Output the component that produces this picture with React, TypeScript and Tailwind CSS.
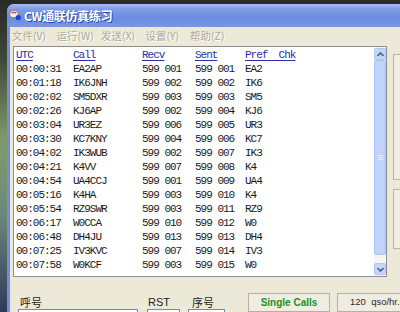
import React from 'react';

interface Qso {
  utc: string;
  call: string;
  recv: string;
  sent: string;
  pref: string;
}

const qsos: Qso[] = [
  { utc: '00:00:31', call: 'EA2AP', recv: '599 001', sent: '599 001', pref: 'EA2' },
  { utc: '00:01:18', call: 'IK6JNH', recv: '599 002', sent: '599 002', pref: 'IK6' },
  { utc: '00:02:02', call: 'SM5DXR', recv: '599 003', sent: '599 003', pref: 'SM5' },
  { utc: '00:02:26', call: 'KJ6AP', recv: '599 002', sent: '599 004', pref: 'KJ6' },
  { utc: '00:03:04', call: 'UR3EZ', recv: '599 006', sent: '599 005', pref: 'UR3' },
  { utc: '00:03:30', call: 'KC7KNY', recv: '599 004', sent: '599 006', pref: 'KC7' },
  { utc: '00:04:02', call: 'IK3WUB', recv: '599 002', sent: '599 007', pref: 'IK3' },
  { utc: '00:04:21', call: 'K4VV', recv: '599 007', sent: '599 008', pref: 'K4' },
  { utc: '00:04:54', call: 'UA4CCJ', recv: '599 001', sent: '599 009', pref: 'UA4' },
  { utc: '00:05:16', call: 'K4HA', recv: '599 003', sent: '599 010', pref: 'K4' },
  { utc: '00:05:54', call: 'RZ9SWR', recv: '599 003', sent: '599 011', pref: 'RZ9' },
  { utc: '00:06:17', call: 'W0CCA', recv: '599 010', sent: '599 012', pref: 'W0' },
  { utc: '00:06:48', call: 'DH4JU', recv: '599 013', sent: '599 013', pref: 'DH4' },
  { utc: '00:07:25', call: 'IV3KVC', recv: '599 007', sent: '599 014', pref: 'IV3' },
  { utc: '00:07:58', call: 'W0KCF', recv: '599 003', sent: '599 015', pref: 'W0' },
];

const menus = ['文件(V)', '运行(W)', '发送(X)', '设置(Y)', '帮助(Z)'];

const cols = 'grid grid-cols-[57px_69px_53px_50px_1fr] h-[14px] leading-[14px]';

function AppIcon() {
  return (
    <svg width="13" height="13" viewBox="0 0 13 13" className="shrink-0">
      <ellipse cx="5" cy="5" rx="4.2" ry="3.6" fill="#f4f4f4" stroke="#7a7a7a" strokeWidth="0.8" />
      <path d="M2.6 4.2 Q5 2.4 7.4 4.2" stroke="#d8332a" strokeWidth="1.3" fill="none" />
      <circle cx="9.2" cy="8.6" r="2.6" fill="#1f3fcf" />
      <path d="M1.5 11 L6 8.5 L7 9.5 L3 12 Z" fill="#8a8a8a" />
    </svg>
  );
}

function Chevron({ up }: { up?: boolean }) {
  return (
    <svg width="7" height="5" viewBox="0 0 7 5">
      <path d={up ? 'M0.5 4 L3.5 1 L6.5 4' : 'M0.5 1 L3.5 4 L6.5 1'} stroke="#4d6185" strokeWidth="1.6" fill="none" />
    </svg>
  );
}

function ScrollBar() {
  return (
    <div className="w-[12px] flex flex-col bg-[#f5f4ef] py-[1px]">
      <div className="h-[12px] shrink-0 rounded-[2px] bg-[#c6d6fb] border border-[#b3c6f2] flex items-center justify-center">
        <Chevron up />
      </div>
      <div className="flex-1 mb-[8px] rounded-[2px] bg-[#c2d3fb] border border-[#adc2f2] flex flex-col items-center justify-center gap-[1px]">
        <div className="w-[5px] h-[1px] bg-[#e8eefd]" />
        <div className="w-[5px] h-[1px] bg-[#e8eefd]" />
        <div className="w-[5px] h-[1px] bg-[#e8eefd]" />
      </div>
      <div className="h-[12px] shrink-0 rounded-[2px] bg-[#c6d6fb] border border-[#b3c6f2] flex items-center justify-center">
        <Chevron />
      </div>
    </div>
  );
}

export default function App() {
  return (
    <div className="w-[400px] h-[312px] overflow-hidden flex bg-[linear-gradient(180deg,#2b2925_0%,#3d4637_18%,#7f9b6c_45%,#6d8a79_68%,#2e3a58_100%)]">
      <div className="ml-[7px] mt-[4px] w-[420px] h-[308px] shrink-0 flex flex-col rounded-tl-[7px] overflow-hidden bg-[#6f8fdc]">
        {/* title bar */}
        <div className="h-[23px] shrink-0 flex items-center gap-[2px] pl-[2px] bg-[linear-gradient(180deg,#a7bcf0_0%,#7e9de6_22%,#6c8de0_60%,#7797e4_100%)]">
          <AppIcon />
          <span className="text-white font-bold text-[12px] tracking-[-0.3px] [font-family:'Noto_Sans_CJK_SC',sans-serif] [text-shadow:1px_1px_0_#2a4aa8]">
            CW通联仿真练习
          </span>
        </div>
        <div className="flex-1 min-h-0 overflow-hidden ml-[3px] bg-[#ece9d8] flex flex-col">
          {/* menu bar */}
          <div className="h-[17px] shrink-0 flex items-center pl-[2px]">
            {menus.map((m) => (
              <span
                key={m}
                className="w-[44.5px] text-[10.5px] leading-[17px] text-[#aca899] [text-shadow:1px_1px_0_#ffffff] [font-family:'Noto_Sans_CJK_SC',sans-serif] whitespace-nowrap"
              >
                {m}
              </span>
            ))}
          </div>
          {/* body */}
          <div className="flex shrink-0 mt-[2px]">
            <div className="ml-[3px] w-[374px] h-[231px] border border-[#8c8e94] bg-white flex">
              <div className="flex-1 pl-[2px] pt-[1px] text-[11px] tracking-[-1px] text-[#1a1a1a] [font-family:'Liberation_Mono',monospace]">
                <div className={`${cols} text-[#2b2fa6]`}>
                  <span className="underline underline-offset-[2px]">UTC</span>
                  <span className="underline underline-offset-[2px]">Call</span>
                  <span className="underline underline-offset-[2px]">Recv</span>
                  <span className="underline underline-offset-[2px]">Sent</span>
                  <span className="underline underline-offset-[2px] whitespace-pre">Pref  Chk</span>
                </div>
                {qsos.map((q) => (
                  <div key={q.utc} className={`${cols} whitespace-pre`}>
                    <span>{q.utc}</span>
                    <span>{q.call}</span>
                    <span>{q.recv}</span>
                    <span>{q.sent}</span>
                    <span>{q.pref}</span>
                  </div>
                ))}
              </div>
              <ScrollBar />
            </div>
            <div className="ml-[6px] flex-1 flex flex-col">
              <div className="mt-[8px] h-[126px] border border-[#b9b6a6] bg-[#f1efe4]" />
              <div className="mt-[9px] h-[60px] border border-[#b9b6a6] bg-[#f1efe4]" />
            </div>
          </div>
          {/* bottom fields */}
          <div className="flex shrink-0 mt-[16px] text-[#1c1c1c]">
            <div className="ml-[8px] w-[120px] flex flex-col">
              <span className="ml-[2px] mt-[3px] text-[11px] leading-[12px] [font-family:'Noto_Sans_CJK_SC',sans-serif]">呼号</span>
              <div className="mt-[1px] h-[20px] border border-[#7f8a9c] bg-white" />
            </div>
            <div className="ml-[9px] w-[33px] flex flex-col">
              <span className="ml-[1px] mt-[3px] text-[11px] leading-[12px] [font-family:'Liberation_Sans',sans-serif]">RST</span>
              <div className="mt-[1px] h-[20px] border border-[#7f8a9c] bg-white" />
            </div>
            <div className="ml-[8px] w-[37px] flex flex-col">
              <span className="ml-[4px] mt-[3px] text-[11px] leading-[12px] [font-family:'Noto_Sans_CJK_SC',sans-serif]">序号</span>
              <div className="mt-[1px] h-[20px] border border-[#7f8a9c] bg-white" />
            </div>
            <div className="ml-[23px] w-[82px] h-[19px] border border-[#b5b2a3] bg-[#efede3] flex items-center justify-center">
              <span className="text-[10px] font-bold text-[#14921c] [font-family:'Liberation_Sans',sans-serif]">Single Calls</span>
            </div>
            <div className="ml-[7px] w-[80px] h-[19px] border border-[#b5b2a3] bg-[#efede3] flex items-center pl-[12px]">
              <span className="text-[9.5px] text-[#2a2a2a] [font-family:'Liberation_Sans',sans-serif] whitespace-pre">120  qso/hr.</span>
            </div>
          </div>
        </div>
      </div>
    </div>
  );
}
